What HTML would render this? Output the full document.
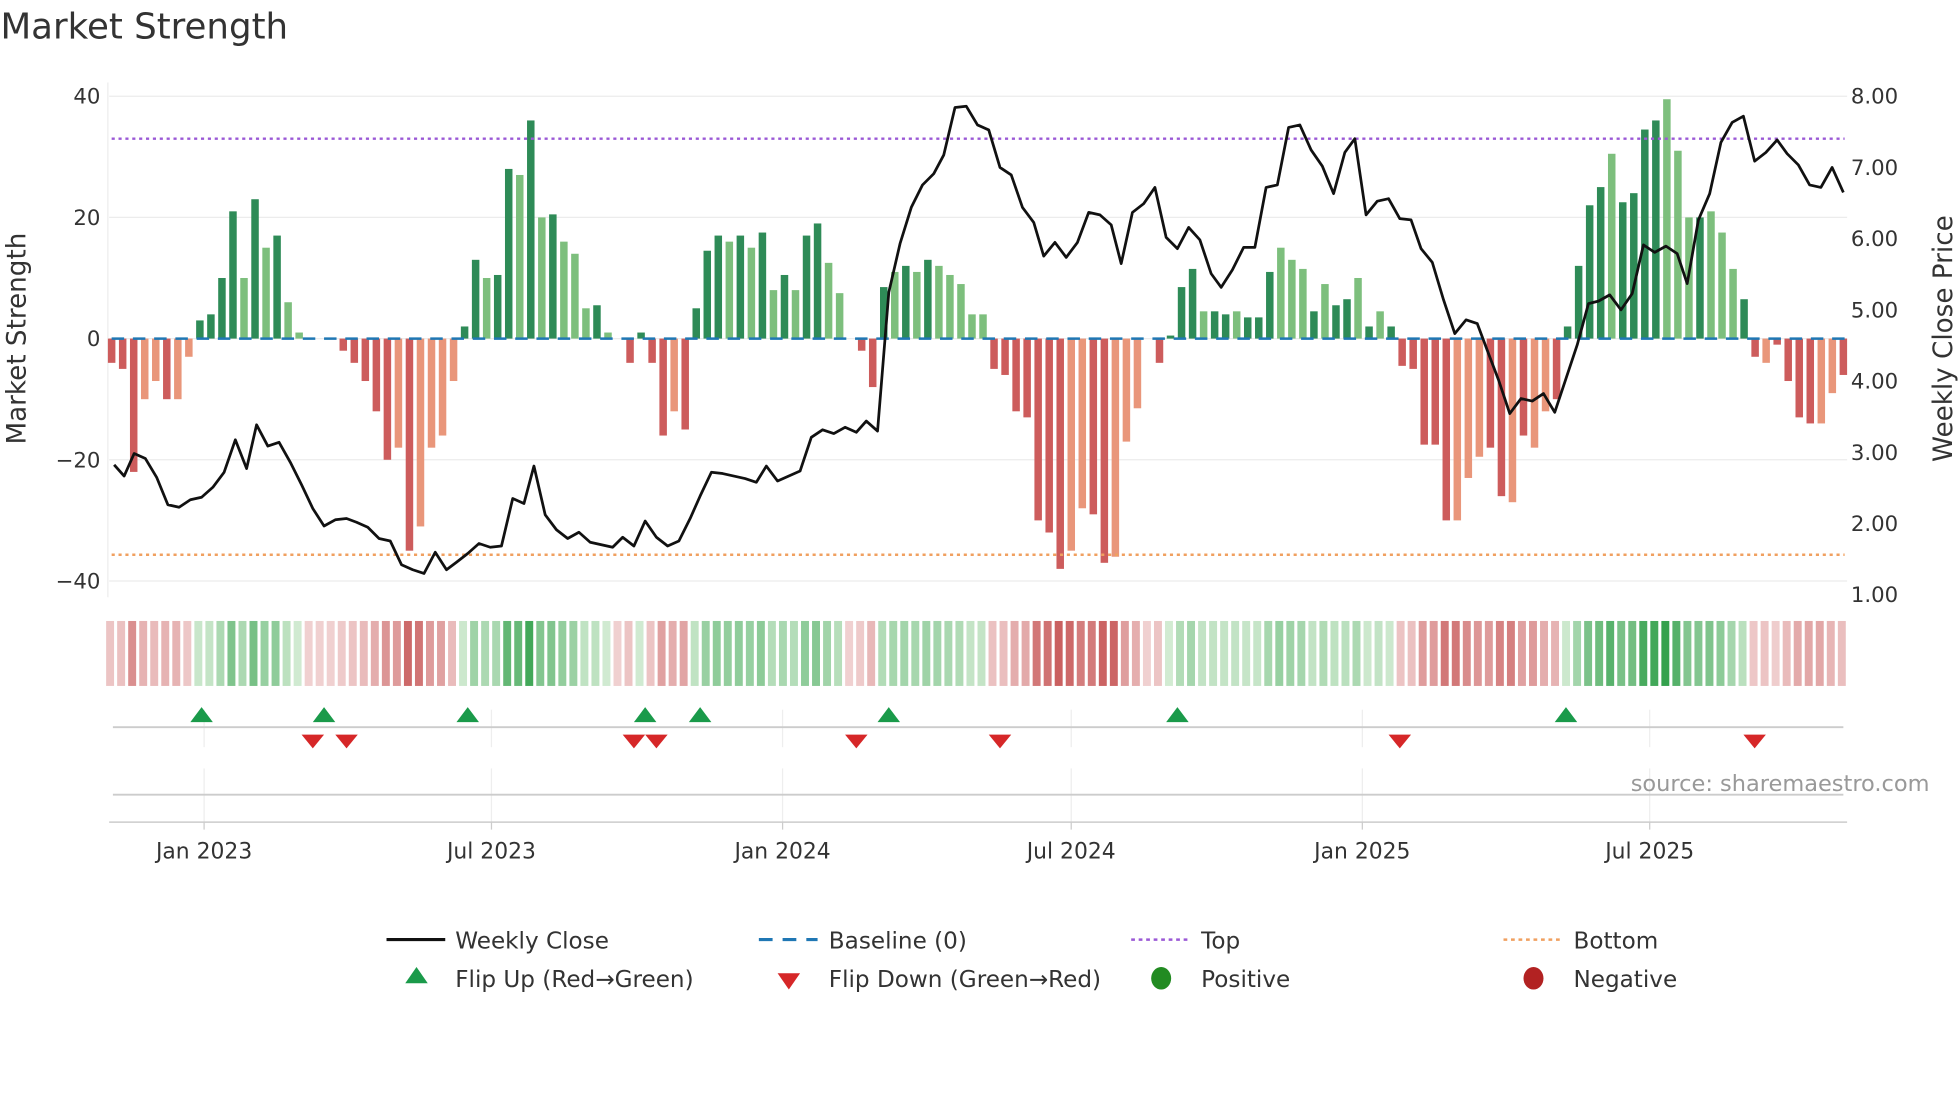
<!DOCTYPE html>
<html><head><meta charset="utf-8"><style>
html,body{margin:0;padding:0;background:#fff;}
svg{display:block;font-family:"DejaVu Sans","Liberation Sans",sans-serif;}
</style></head><body>
<svg id="s" width="1960" height="1102" viewBox="0 0 1568 882" xmlns="http://www.w3.org/2000/svg">
<rect width="1568" height="882" fill="#fff"/>
<text x="0" y="31" font-size="28.5" fill="#333">Market Strength</text>
<g stroke="#ececec" stroke-width="1">
<line x1="87" y1="77" x2="1478" y2="77"/><line x1="87" y1="174" x2="1478" y2="174"/>
<line x1="87" y1="271" x2="1478" y2="271"/><line x1="87" y1="368" x2="1478" y2="368"/>
<line x1="87" y1="465" x2="1478" y2="465"/>
</g>
<line x1="86" y1="66" x2="86" y2="478" stroke="#ececec"/>
<g font-size="17" fill="#333" text-anchor="end">
<text x="80" y="83">40</text><text x="80" y="180">20</text><text x="80" y="277">0</text>
<text x="80" y="374">−20</text><text x="80" y="471">−40</text>
</g>
<g font-size="17" fill="#333">
<text x="1481" y="83">8.00</text><text x="1481" y="140">7.00</text><text x="1481" y="197">6.00</text>
<text x="1481" y="254">5.00</text><text x="1481" y="311">4.00</text><text x="1481" y="368">3.00</text>
<text x="1481" y="425">2.00</text><text x="1481" y="482">1.00</text>
</g>
<text transform="translate(20,271) rotate(-90)" font-size="21" fill="#333" text-anchor="middle">Market Strength</text>
<text transform="translate(1562,271) rotate(-90)" font-size="21" fill="#333" text-anchor="middle">Weekly Close Price</text>
<g id="bars"></g>
<line x1="89" y1="111" x2="1476" y2="111" stroke="#9b59d6" stroke-width="2" stroke-dasharray="2.5,3"/>
<line x1="89" y1="444" x2="1476" y2="444" stroke="#f0a060" stroke-width="2" stroke-dasharray="2.5,3"/>
<line x1="89" y1="271" x2="1476" y2="271" stroke="#1f77b4" stroke-width="2" stroke-dasharray="10,7"/>
<polyline id="price" fill="none" stroke="#111" stroke-width="2.2" stroke-linejoin="round" points="91,372 99,381 107,363 116,367 125,382 134,404 143,406 152,400 161,398 170,390 179,378 188,352 197,375 205,340 214,357 223,354 232,370 241,388 250,407 259,421 268,416 277,415 285,418 294,422 303,431 312,433 321,452 330,456 339,459 348,442 357,456 365,450 374,443 383,435 392,438 401,437 410,399 419,403 427,373 436,412 445,424 454,431 463,426 472,434 481,436 490,438 498,430 507,437 516,417 525,430 534,437 543,433 552,415 560,397 569,378 578,379 587,381 596,383 605,386 613,373 622,385 631,381 640,377 649,350 658,344 667,347 676,342 685,346 693,337 702,345 711,234 720,195 729,166 738,148 747,139 755,124 764,86 773,85 782,100 791,104 800,134 809,140 818,166 827,178 835,205 844,194 853,206 862,194 871,170 880,172 889,180 897,211 906,170 915,163 924,150 933,190 942,199 951,182 960,192 969,219 977,230 986,216 995,198 1004,198 1013,150 1022,148 1031,102 1040,100 1049,120 1058,133 1067,155 1076,122 1084,111 1093,172 1102,161 1111,159 1120,175 1129,176 1137,199 1146,210 1155,240 1164,267 1173,256 1182,259 1191,283 1199,304 1208,331 1217,319 1226,321 1235,315 1244,330 1253,303 1262,276 1271,243 1279,241 1288,236 1297,248 1306,235 1315,196 1324,202 1333,197 1342,203 1350,227 1359,176 1368,155 1377,114 1386,98 1395,93 1404,129 1413,122 1422,112 1430,123 1439,132 1448,148 1457,150 1466,134 1475,154"/>
<g id="heat"></g>
<g stroke="#eee" stroke-width="1">
<line x1="163" y1="568" x2="163" y2="598"/><line x1="393" y1="568" x2="393" y2="598"/><line x1="626" y1="568" x2="626" y2="598"/><line x1="857" y1="568" x2="857" y2="598"/><line x1="1090" y1="568" x2="1090" y2="598"/><line x1="1320" y1="568" x2="1320" y2="598"/>
<line x1="163" y1="615" x2="163" y2="658"/><line x1="393" y1="615" x2="393" y2="658"/><line x1="626" y1="615" x2="626" y2="658"/><line x1="857" y1="615" x2="857" y2="658"/><line x1="1090" y1="615" x2="1090" y2="658"/><line x1="1320" y1="615" x2="1320" y2="658"/>
</g>
<line x1="90" y1="582" x2="1475" y2="582" stroke="#ccc" stroke-width="1.5"/>
<line x1="90" y1="636" x2="1475" y2="636" stroke="#ccc" stroke-width="1.5"/>
<line x1="87" y1="658" x2="1478" y2="658" stroke="#ccc" stroke-width="1.2"/>
<g stroke="#ccc"><line x1="163" y1="658" x2="163" y2="664"/><line x1="393" y1="658" x2="393" y2="664"/><line x1="626" y1="658" x2="626" y2="664"/><line x1="857" y1="658" x2="857" y2="664"/><line x1="1090" y1="658" x2="1090" y2="664"/><line x1="1320" y1="658" x2="1320" y2="664"/></g>
<g id="marks"></g>
<text x="1544" y="633" font-size="18" fill="#999" text-anchor="end">source: sharemaestro.com</text>
<g font-size="17.5" fill="#333" text-anchor="middle">
<text x="163" y="687">Jan 2023</text><text x="393" y="687">Jul 2023</text><text x="626" y="687">Jan 2024</text>
<text x="857" y="687">Jul 2024</text><text x="1090" y="687">Jan 2025</text><text x="1320" y="687">Jul 2025</text>
</g>
<g font-size="18.5" fill="#333">
<line x1="309" y1="752" x2="356" y2="752" stroke="#111" stroke-width="2.5"/>
<text x="364" y="759">Weekly Close</text>
<line x1="607" y1="752" x2="654" y2="752" stroke="#1f77b4" stroke-width="2.5" stroke-dasharray="11,8"/>
<text x="663" y="759">Baseline (0)</text>
<line x1="905" y1="752" x2="952" y2="752" stroke="#9b59d6" stroke-width="2" stroke-dasharray="3,3"/>
<text x="961" y="759">Top</text>
<line x1="1203" y1="752" x2="1250" y2="752" stroke="#f0a060" stroke-width="2" stroke-dasharray="3,3"/>
<text x="1259" y="759">Bottom</text>
<polygon points="333,774 324,787 342,787" fill="#1a9a4a"/>
<text x="364" y="790">Flip Up (Red→Green)</text>
<polygon points="622,779 640,779 631,792" fill="#d62728"/>
<text x="663" y="790">Flip Down (Green→Red)</text>
<ellipse cx="929" cy="783" rx="8" ry="9" fill="#228b22"/>
<text x="961" y="790">Positive</text>
<ellipse cx="1227" cy="783" rx="8" ry="9" fill="#b22222"/>
<text x="1259" y="790">Negative</text>
</g>
</svg>
<script>
var v=[-4,-5,-22,-10,-7,-10,-10,-3,3,4,10,21,10,23,15,17,6,1,0,0,0,-2,-4,-7,-12,-20,-18,-35,-31,-18,-16,-7,2,13,10,10.5,28,27,36,20,20.5,16,14,5,5.5,1,0,-4,1,-4,-16,-12,-15,5,14.5,17,16,17,15,17.5,8,10.5,8,17,19,12.5,7.5,0,-2,-8,8.5,11,12,11,13,12,10.5,9,4,4,-5,-6,-12,-13,-30,-32,-38,-35,-28,-29,-37,-36,-17,-11.5,0,-4,0.5,8.5,11.5,4.5,4.5,4,4.5,3.5,3.5,11,15,13,11.5,4.5,9,5.5,6.5,10,2,4.5,2,-4.5,-5,-17.5,-17.5,-30,-30,-23,-19.5,-18,-26,-27,-16,-18,-12,-10,2,12,22,25,30.5,22.5,24,34.5,36,39.5,31,20,20,21,17.5,11.5,6.5,-3,-4,-1,-7,-13,-14,-14,-9,-6];
var light={3:1,4:1,6:1,7:1,12:1,14:1,16:1,17:1,26:1,28:1,29:1,30:1,31:1,34:1,37:1,39:1,41:1,42:1,43:1,45:1,51:1,56:1,58:1,60:1,62:1,65:1,66:1,71:1,73:1,75:1,76:1,77:1,78:1,79:1,87:1,88:1,91:1,92:1,93:1,99:1,102:1,106:1,107:1,108:1,110:1,113:1,115:1,122:1,123:1,124:1,127:1,129:1,130:1,136:1,141:1,142:1,143:1,145:1,146:1,147:1,150:1,155:1,156:1};
var ns="http://www.w3.org/2000/svg";
function el(t,a,p){var e=document.createElementNS(ns,t);for(var k in a)e.setAttribute(k,a[k]);document.getElementById(p).appendChild(e);}
function mix(a,b,t){var r=[];for(var i=0;i<3;i++)r.push(Math.round(a[i]+(b[i]-a[i])*t));return "rgb("+r+")";}
var step=(1475-89)/(v.length-1), bw=Math.min(6,step*0.7);
for(var i=0;i<v.length;i++){
 var x=89+i*step, val=v[i], h=Math.abs(val)*4.85, y=val>=0?271-h:271;
 var c=val>=0?(light[i]?"#7dbf7d":"#2e8b57"):(light[i]?"#e9967a":"#cd5c5c");
 if(h>0.2) el("rect",{x:x-bw/2,y:y,width:bw,height:h,fill:c},"bars");
 var t=Math.min(Math.abs(val)/40,1), col;
 if(val>0) col=mix([212,236,212],[50,160,75],t); else col=mix([240,208,208],[200,90,90],t);
 el("rect",{x:x-step/2,y:497,width:step*0.72,height:52,fill:col},"heat");
}
[161,259,374,516,560,711,942,1253].forEach(function(x){el("polygon",{points:(x)+",566 "+(x-9)+",578 "+(x+9)+",578",fill:"#1a9a4a"},"marks");});
[250,277,507,525,685,800,1120,1404].forEach(function(x){el("polygon",{points:(x-9)+",588 "+(x+9)+",588 "+x+",599",fill:"#d62728"},"marks");});
</script>
</body></html>
